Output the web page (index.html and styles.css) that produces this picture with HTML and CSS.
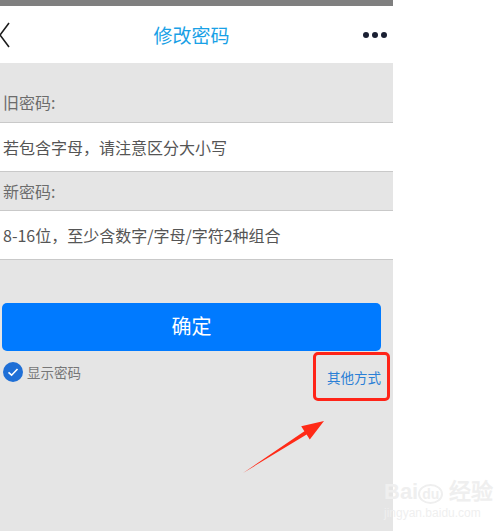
FILE: index.html
```html
<!DOCTYPE html>
<html lang="zh-CN">
<head>
  <meta charset="UTF-8">
  <meta name="viewport" content="width=device-width, initial-scale=1.0">
  <title>修改密码</title>
  <link rel="stylesheet" href="styles.css">
</head>
<body>
  <div class="page">
    <div class="phone">
      <div class="status-bar"></div>

      <!-- Title bar -->
      <div class="header">
        <svg class="back" width="10" height="26" viewBox="0 0 10 26">
          <path d="M9 1 L0 13 L9 25" fill="none" stroke="#1c1c1c" stroke-width="1.6"/>
        </svg>
        <div class="title">修改密码</div>
        <div class="more">
          <span class="dot"></span><span class="dot"></span><span class="dot"></span>
        </div>
      </div>

      <!-- Password fields -->
      <div class="form">
        <div class="label-row first">旧密码:</div>
        <div class="input-row">若包含字母，请注意区分大小写</div>
        <div class="label-row">新密码:</div>
        <div class="input-row">8-16位，至少含数字/字母/字符2种组合</div>
      </div>

      <div class="submit">确定</div>

      <div class="options">
        <div class="show-pwd">
          <svg class="check" width="20" height="20" viewBox="0 0 20 20">
            <circle cx="10" cy="10" r="10" fill="#1f6fd6"/>
            <path d="M5.5 10.3 L8.6 13.2 L14.5 7" fill="none" stroke="#fff" stroke-width="1.6"/>
          </svg>
          <span>显示密码</span>
        </div>
        <div class="other">其他方式</div>
      </div>

      <!-- Annotation overlays -->
      <div class="mark-box"></div>
      <svg class="arrow" width="90" height="64" viewBox="0 0 90 64">
        <path d="M3 58 L64.4 16.2 L61.2 11.2 L84 6 L69.8 24.6 L66.6 19.6 Z" fill="#ff2a17"/>
      </svg>
    </div>

    <div class="watermark">
      <div class="wm-logo">Bai<span class="wm-du">du</span> 经验</div>
      <div class="wm-url">jingyan.baidu.com</div>
    </div>
  </div>
</body>
</html>
```

FILE: styles.css
```css
body {
  margin: 0;
  background: #fff;
  font-family: "Noto Sans CJK SC", "Noto Sans", sans-serif;
}

.page {
  width: 500px;
  height: 531px;
  position: relative;
  overflow: hidden;
}

.phone {
  width: 393px;
  height: 531px;
  background: #e5e5e5;
  display: flex;
  flex-direction: column;
  position: relative;
}

.status-bar {
  height: 6px;
  background: #7f7f7f;
}

.header {
  height: 57px;
  background: #fff;
  display: grid;
  grid-template-columns: 1fr auto 1fr;
  align-items: center;
  padding-right: 6px;
}
.title {
  font-size: 19px;
  color: #19a1e6;
  margin-right: 4px;
}
.more {
  display: flex;
  justify-content: flex-end;
  gap: 3px;
}
.dot {
  width: 6px;
  height: 6px;
  border-radius: 50%;
  background: #1a1f33;
}

.label-row {
  height: 38px;
  line-height: 38px;
  padding-left: 3px;
  font-size: 16px;
  color: #6c6c6c;
  border-bottom: 1px solid #c9c9c9;
}
.label-row.first {
  height: 60px;
  line-height: 20px;
  padding-top: 29px;
  box-sizing: border-box;
}

.input-row {
  height: 48px;
  line-height: 48px;
  padding-left: 3px;
  font-size: 16px;
  color: #555;
  background: #fff;
  border-bottom: 1px solid #c9c9c9;
}

.submit {
  margin: 43px 0 0 2px;
  width: 379px;
  height: 48px;
  line-height: 46px;
  border-radius: 5px;
  background: #007aff;
  color: #fff;
  font-size: 20px;
  text-align: center;
}

.options {
  display: flex;
  justify-content: space-between;
  padding: 11px 12px 0 3px;
}
.show-pwd {
  display: flex;
  align-items: center;
  gap: 4px;
  font-size: 13.5px;
  color: #777;
  height: 20px;
}
.other {
  font-size: 13.5px;
  color: #2a7fd6;
  margin-top: 5px;
}

.mark-box {
  position: absolute;
  left: 313px;
  top: 352px;
  width: 71px;
  height: 43px;
  border: 3px solid #ff2418;
  border-radius: 5px;
}

.arrow {
  position: absolute;
  left: 240px;
  top: 415px;
}

.watermark {
  position: absolute;
  left: 384px;
  top: 480px;
  font-family: "Liberation Sans", sans-serif;
}
.wm-logo {
  font-size: 22px;
  font-weight: bold;
  line-height: 24px;
  color: #efefef;
}
.wm-du {
  font-size: 14px;
  border: 2px solid #efefef;
  border-radius: 50%;
  padding: 0 2px;
}
.wm-url {
  font-size: 12px;
  color: #efefef;
}
```
